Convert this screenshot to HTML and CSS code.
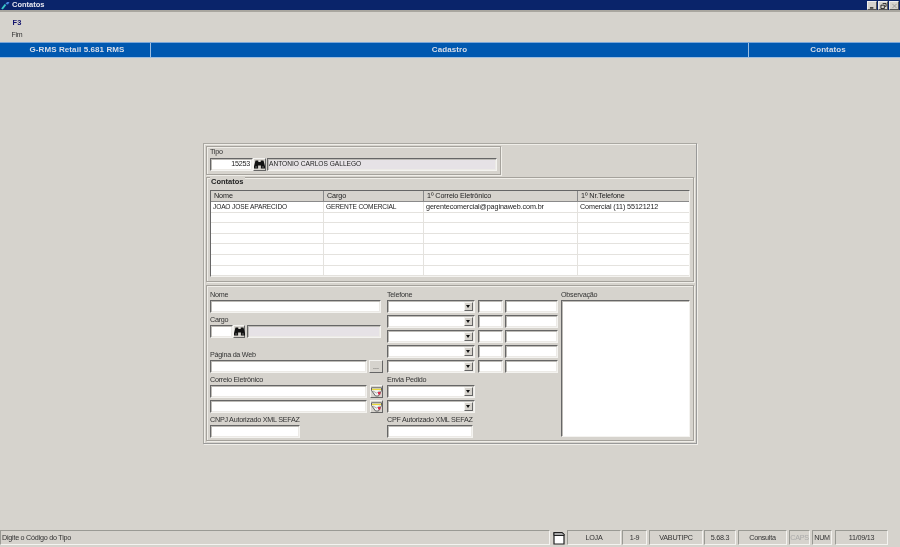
FILE: index.html
```html
<!DOCTYPE html>
<html lang="pt">
<head>
<meta charset="utf-8">
<title>Contatos</title>
<link rel="stylesheet" href="styles.css">
</head>
<body>
<svg class="defs" width="0" height="0" aria-hidden="true">
  <defs>
    <symbol id="bino" viewBox="0 0 11 9">
      <path d="M1.500 .5h2.800v1.600h2.400V.5h2.800l1.500 5.800v2.200H6.900V5.600H4.100v2.900H0V6.300z" fill="#111"/>
      <path d="M1.200 6.400h1.900v1.100H1.200zM7.900 6.400h1.900v1.100H7.900z" fill="#777"/>
    </symbol>
    <symbol id="mail" viewBox="0 0 11 10">
      <path d="M.5 .8h10v2.600L7.500 9h-3L.5 3.400z" fill="#f4f4f4" stroke="#444" stroke-width=".8"/>
      <path d="M1 1.800h9v1.300H1z" fill="#e8d83a"/>
      <path d="M2 4l3.500 2L9 4" fill="none" stroke="#777" stroke-width=".6"/>
      <rect x="7" y="5" width="2.400" height="2.400" fill="#e02a4a"/>
    </symbol>
  </defs>
</svg>
<header class="titlebar">
  <svg class="appicon" viewBox="0 0 9 9" width="9" height="9" aria-hidden="true"><path d="M1 8L4.500 3.500" stroke="#38c8c8" stroke-width="2"/><path d="M4.500 3L6 1h2.500L7 3.500z" fill="#4a8ae0"/></svg>
  <span class="title-text">Contatos</span>
  <span class="winbtns">
    <span class="winbtn"><svg viewBox="0 0 8 7" width="8" height="7"><rect x="1" y="5" width="4" height="1.500" fill="#111"/></svg></span>
    <span class="winbtn"><svg viewBox="0 0 8 7" width="8" height="7"><path d="M3 .5h4v3.500H6M1 2.500h4v4H1z" fill="none" stroke="#111"/></svg></span>
    <span class="winbtn"><svg viewBox="0 0 8 7" width="8" height="7"><path d="M1.500 1l5 5M6.500 1l-5 5" stroke="#999" stroke-width="1.100"/></svg></span>
  </span>
</header>
<div class="toolbar">
  <div class="tool"><span class="tool-key">F3</span><span class="tool-name">Fim</span></div>
</div>
<div class="bluebar">
  <div class="blue-cell blue-a">G-RMS Retail 5.681 RMS</div>
  <div class="blue-cell blue-b">Cadastro</div>
  <div class="blue-cell blue-c">Contatos</div>
</div>
<main class="content">
  <div class="form-panel">
    <section class="group tipo">
      <div class="lbl">Tipo</div>
      <div class="row">
        <div class="field w-tipo num">15253</div>
        <button class="btn btn-bino"><svg width="11" height="9"><use href="#bino"/></svg></button>
        <div class="field ro w-tipo-name">ANTONIO CARLOS GALLEGO</div>
      </div>
    </section>
    <section class="group contatos">
      <span class="legend">Contatos</span>
      <div class="grid-box">
        <div class="grid-row grid-head">
          <div class="c c1">Nome</div><div class="c c2">Cargo</div><div class="c c3">1º Correio Eletrônico</div><div class="c c4">1º Nr.Telefone</div>
        </div>
        <div class="grid-row">
          <div class="c c1 up">JOAO JOSE APARECIDO</div><div class="c c2 up">GERENTE COMERCIAL</div><div class="c c3">gerentecomercial@paginaweb.com.br</div><div class="c c4">Comercial (11) 55121212</div>
        </div>
        <div class="grid-row"><div class="c c1"></div><div class="c c2"></div><div class="c c3"></div><div class="c c4"></div></div>
        <div class="grid-row"><div class="c c1"></div><div class="c c2"></div><div class="c c3"></div><div class="c c4"></div></div>
        <div class="grid-row"><div class="c c1"></div><div class="c c2"></div><div class="c c3"></div><div class="c c4"></div></div>
        <div class="grid-row"><div class="c c1"></div><div class="c c2"></div><div class="c c3"></div><div class="c c4"></div></div>
        <div class="grid-row"><div class="c c1"></div><div class="c c2"></div><div class="c c3"></div><div class="c c4"></div></div>
        <div class="grid-row"><div class="c c1"></div><div class="c c2"></div><div class="c c3"></div><div class="c c4"></div></div>
      </div>
    </section>
    <section class="group detail">
      <div class="col col-a">
        <div class="lbl">Nome</div>
        <div class="row"><div class="field w-nome"></div></div>
        <div class="lbl">Cargo</div>
        <div class="row">
          <div class="field w-cargo"></div>
          <button class="btn btn-bino btn-small"><svg width="11" height="9"><use href="#bino"/></svg></button>
          <div class="field ro w-cargo-name"></div>
        </div>
        <div class="lbl lbl-far">Página da Web</div>
        <div class="row">
          <div class="field w-web"></div>
          <button class="btn btn-dots">...</button>
        </div>
        <div class="lbl">Correio Eletrônico</div>
        <div class="row">
          <div class="field w-web"></div>
          <button class="btn btn-mail"><svg width="11" height="10"><use href="#mail"/></svg></button>
        </div>
        <div class="row row-next">
          <div class="field w-web"></div>
          <button class="btn btn-mail"><svg width="11" height="10"><use href="#mail"/></svg></button>
        </div>
        <div class="lbl">CNPJ Autorizado XML SEFAZ</div>
        <div class="row"><div class="field w-cnpj"></div></div>
      </div>
      <div class="col col-b">
        <div class="lbl">Telefone</div>
        <div class="row phone"><div class="field combo"><span class="arrow"></span></div><div class="field w-ddd"></div><div class="field w-fone"></div></div>
        <div class="row phone row-next"><div class="field combo"><span class="arrow"></span></div><div class="field w-ddd"></div><div class="field w-fone"></div></div>
        <div class="row phone row-next"><div class="field combo"><span class="arrow"></span></div><div class="field w-ddd"></div><div class="field w-fone"></div></div>
        <div class="row phone row-next"><div class="field combo"><span class="arrow"></span></div><div class="field w-ddd"></div><div class="field w-fone"></div></div>
        <div class="row phone row-next"><div class="field combo"><span class="arrow"></span></div><div class="field w-ddd"></div><div class="field w-fone"></div></div>
        <div class="lbl">Envia Pedido</div>
        <div class="row"><div class="field combo"><span class="arrow"></span></div></div>
        <div class="row row-next"><div class="field combo"><span class="arrow"></span></div></div>
        <div class="lbl">CPF Autorizado XML SEFAZ</div>
        <div class="row"><div class="field w-cpf"></div></div>
      </div>
      <div class="col col-c">
        <div class="lbl">Observação</div>
        <div class="field memo"></div>
      </div>
    </section>
  </div>
</main>
<footer class="statusbar">
  <div class="st st-msg">Digite o Código do Tipo</div>
  <div class="st-icon"><svg viewBox="0 0 14 14" width="14" height="14" aria-hidden="true"><path d="M2 1.500h8l2 2V13H2z" fill="#fff" stroke="#222" stroke-width="1.200"/><path d="M2 1.500h8l2 2v1H2z" fill="#a8a8a8" stroke="#222"/></svg></div>
  <div class="st st-loja">LOJA</div>
  <div class="st st-range">1-9</div>
  <div class="st st-host">VABUTIPC</div>
  <div class="st st-ver">5.68.3</div>
  <div class="st st-mode">Consulta</div>
  <div class="st st-caps">CAPS</div>
  <div class="st st-num">NUM</div>
  <div class="st st-date">11/09/13</div>
</footer>
</body>
</html>
```

FILE: styles.css
```css
* { box-sizing: border-box; }
html, body { margin: 0; height: 547px; overflow: hidden; }
html { background: #d6d3cd; }
body {
  background: #d6d3cd;
  font: 7.2px/1 "Liberation Sans", Arial, sans-serif;
  letter-spacing: -.25px;
  color: #222;
  display: flex;
  flex-direction: column;
  filter: blur(.3px);
}
.defs { display: block; height: 0; }

.titlebar {
  height: 12px;
  flex: none;
  display: flex;
  align-items: center;
  background: #0a246a;
  border-bottom: 2px solid #a9a69f;
  color: #e8e8f0;
  padding: 0 0 0 1px;
}
.appicon { margin-right: 2px; }
.title-text { font-weight: bold; font-size: 7.500px; letter-spacing: 0; }
.winbtns { margin-left: auto; display: flex; padding: 1px 1px 0 0; align-self: flex-start; }
.winbtn {
  width: 10px; height: 9px; margin-left: 1px; display: flex; align-items: center; justify-content: center;
  background: #d6d3cd;
  border: 1px solid; border-color: #eee #555 #555 #eee;
}
.winbtn svg { width: 7px; height: 6px; }

.toolbar { height: 30px; flex: none; padding: 7px 0 0 8px; }
.tool { width: 18px; display: flex; flex-direction: column; align-items: center; gap: 4px; }
.tool-key { color: #14146e; font-weight: bold; font-size: 7.500px; letter-spacing: 0; }
.tool-name { font-size: 7px; color: #333; }

.bluebar {
  height: 16px; flex: none;
  display: grid;
  grid-template-columns: 151px 598px 151px;
  background: #0058b0;
  border-top: 1px solid #7aa6d8;
  border-bottom: 1px solid #9dbde0;
}
.blue-cell {
  display: flex; align-items: center; justify-content: center;
  color: #d8dde8; font-weight: bold; font-size: 8px;
  letter-spacing: .1px;
}
.blue-a { padding-left: 4px; }
.blue-c { padding-left: 7px; }
.blue-a, .blue-b { border-right: 1px solid #9dbde0; }

.content { flex: 1; padding: 85px 0 0 203px; min-height: 0; }
.form-panel {
  width: 494px; height: 301px;
  padding: 2px;
  border: 1px solid; border-color: #aaa8a2 #999 #999 #aaa8a2;
  box-shadow: inset 1px 1px 0 #f0eee9, 1px 1px 0 #f0eee9;
}
.group {
  border: 1px solid #a5a29c;
  box-shadow: inset 1px 1px 0 #f0eee9, 1px 1px 0 #f0eee9;
}
.tipo { width: 295px; height: 29px; padding: 1px 3px 0; margin-bottom: 2px; }
.contatos { height: 105px; padding: 12px 3px 0; margin-bottom: 3px; position: relative; }
.detail { height: 156px; padding: 3px 3px 0; display: flex; }
.legend {
  position: absolute; left: 3px; top: -1px; padding: 0 1px;
  background: #d6d3cd; font-weight: bold; color: #222; font-size: 7.500px; line-height: 9px; letter-spacing: 0;
}

.lbl { height: 11px; line-height: 12px; margin-top: 1px; color: #333; white-space: nowrap; }
.col > .lbl:first-child { margin-top: 0; }
.tipo > .lbl { margin-top: 0; height: 10px; line-height: 8px; }
.lbl-far { margin-top: 11px; }
.row { display: flex; height: 13px; }
.row-next { margin-top: 2px; }

.field {
  height: 13px;
  background: #fff;
  border: 1px solid; border-color: #666 #f4f3f0 #f4f3f0 #666;
  box-shadow: inset 1px 1px 0 #bdbbb6, inset -1px -1px 0 #eceae6;
  padding: 1px 1px 0;
  line-height: 8px;
  white-space: nowrap;
  overflow: hidden;
  flex: none;
}
.ro { background: #e6e2e6; font-size: 6.600px; letter-spacing: 0; }
.num { text-align: right; padding-right: 2px; }
.w-tipo { width: 43px; }
.w-tipo-name { width: 230px; margin-left: 1px; }
.w-nome { width: 171px; }
.w-cargo { width: 23px; }
.w-cargo-name { width: 134px; margin-left: 2px; }
.w-web { width: 157px; }
.w-cnpj { width: 90px; }
.w-cpf { width: 86px; }
.w-ddd { width: 25px; margin-left: 3px; }
.w-fone { width: 53px; margin-left: 2px; }

.btn {
  width: 13px; height: 13px; padding: 0; flex: none;
  display: flex; align-items: center; justify-content: center;
  background: #d6d3cd; color: #333; font: 7px/1 "Liberation Sans", Arial, sans-serif;
  border: 1px solid; border-color: #f4f3f0 #666 #666 #f4f3f0;
}
.btn svg { display: block; flex: none; }
.btn-small { width: 12px; }
.btn-dots { width: 14px; margin-left: 2px; }
.btn-mail { margin-left: 3px; }

.col { flex: none; }
.col-a { width: 177px; }
.col-b { width: 174px; }
.col-c { width: 129px; }

.combo {
  width: 88px; padding: 0;
  display: flex; justify-content: flex-end;
}
.arrow {
  width: 9px; height: 9px; margin: 1px 1px 0 0;
  background: #d6d3cd;
  border: 1px solid; border-color: #f4f3f0 #666 #666 #f4f3f0;
  position: relative;
  display: block;
}
.arrow::after {
  content: ""; position: absolute; left: 1px; top: 2px;
  border: 2.500px solid transparent; border-top: 3px solid #111; border-bottom: 0;
}
.memo { width: 129px; height: 137px; box-shadow: inset 1px 1px 0 #bdbbb6; }

.grid-box {
  width: 480px; height: 87px; background: #fff; overflow: hidden;
  border: 1px solid; border-color: #666 #f4f3f0 #f4f3f0 #666;
}
.grid-row {
  height: 10.600px;
  display: grid;
  grid-template-columns: 113px 100px 154px 1fr;
  border-bottom: 1px solid #e4e2de;
}
.grid-head {
  height: 11px;
  background: #d6d3cd;
  border-bottom: 1px solid #8a8a8a;
}
.c { border-right: 1px solid #e4e2de; padding: .5px 0 0 2px; white-space: nowrap; line-height: 8px; color: #222; letter-spacing: -.1px; }
.up { font-size: 6.600px; letter-spacing: -.15px; }
.grid-head .c { border-right-color: #8a8a8a; padding: 1px 0 0 3px; }
.c4 { border-right: 0; }

.statusbar {
  height: 17px; flex: none;
  display: flex; align-items: stretch; padding-bottom: 2px;
}
.st {
  height: 15px; flex: none;
  border: 1px solid; border-color: #9a9a94 #f4f3f0 #f4f3f0 #9a9a94;
  display: flex; align-items: center; justify-content: center;
  color: #333;
}
.st-msg { width: 550px; justify-content: flex-start; padding-left: 1px; margin-right: 2px; }
.st-icon { width: 15px; height: 15px; flex: none; display: flex; align-items: center; }
.st-loja { width: 54px; }
.st-range { width: 25px; margin-left: 1px; }
.st-host { width: 54px; margin-left: 2px; }
.st-ver { width: 32px; margin-left: 1px; }
.st-mode { width: 49px; margin-left: 2px; }
.st-caps { width: 21px; margin-left: 2px; color: #aaa; }
.st-num { width: 20px; margin-left: 2px; }
.st-date { width: 53px; margin-left: 3px; }
```
